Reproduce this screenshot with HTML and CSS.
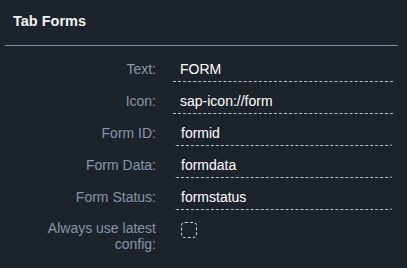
FILE: index.html
```html
<!DOCTYPE html>
<html>
<head>
<meta charset="utf-8">
<link rel="stylesheet" href="styles.css">
</head>
<body>
<div class="panel">
  <div class="title">Tab Forms</div>
  <div class="divider"></div>
  <div class="form">
    <div class="label">Text:</div>
    <div class="field plain">FORM</div>
    <div class="label">Icon:</div>
    <div class="field plain">sap-icon://form</div>
    <div class="label">Form ID:</div>
    <div class="field round">formid</div>
    <div class="label">Form Data:</div>
    <div class="field round">formdata</div>
    <div class="label">Form Status:</div>
    <div class="field round">formstatus</div>
    <div class="label multi">Always use latest config:</div>
    <div class="checkcell"><span class="checkbox"></span></div>
  </div>
</div>
</body>
</html>
```
FILE: styles.css
```css
html, body {
  margin: 0;
  padding: 0;
  background: #1d232b;
  width: 407px;
  height: 268px;
  overflow: hidden;
}
.panel {
  font-family: "Liberation Sans", Arial, sans-serif;
  padding: 0 9px 0 5px;
}
.title {
  color: #f0f2f4;
  font-weight: bold;
  font-size: 14.5px;
  line-height: 17px;
  padding: 13px 0 0 8px;
  height: 45px;
  box-sizing: border-box;
}
.divider {
  height: 1px;
  background: #7f8fa0;
}
.form {
  display: grid;
  grid-template-columns: 151px 220px;
  grid-auto-rows: 26px;
  column-gap: 17px;
  row-gap: 6px;
  padding-top: 10px;
}
.label {
  color: #8596a8;
  font-size: 14px;
  text-align: right;
  line-height: 26px;
}
.label.multi {
  line-height: 16px;
  padding: 4px 0 0 30px;
}
.field {
  height: 26px;
  box-sizing: border-box;
  color: #ffffff;
  font-size: 14px;
  line-height: 26px;
  padding-left: 7px;
}
.field.plain {
  border-bottom: 1px dashed #b5bfca;
}
.field.round {
  border: 1px dashed #b5bfca;
  border-top: none;
  border-left-color: transparent;
  border-right-color: transparent;
  border-radius: 0 0 4px 4px;
}
.checkcell {
  padding: 6px 0 0 8px;
}
.checkbox {
  display: block;
  width: 16px;
  height: 16px;
  box-sizing: border-box;
  border: 1px dashed #c9d1da;
  border-radius: 4px;
}
```
